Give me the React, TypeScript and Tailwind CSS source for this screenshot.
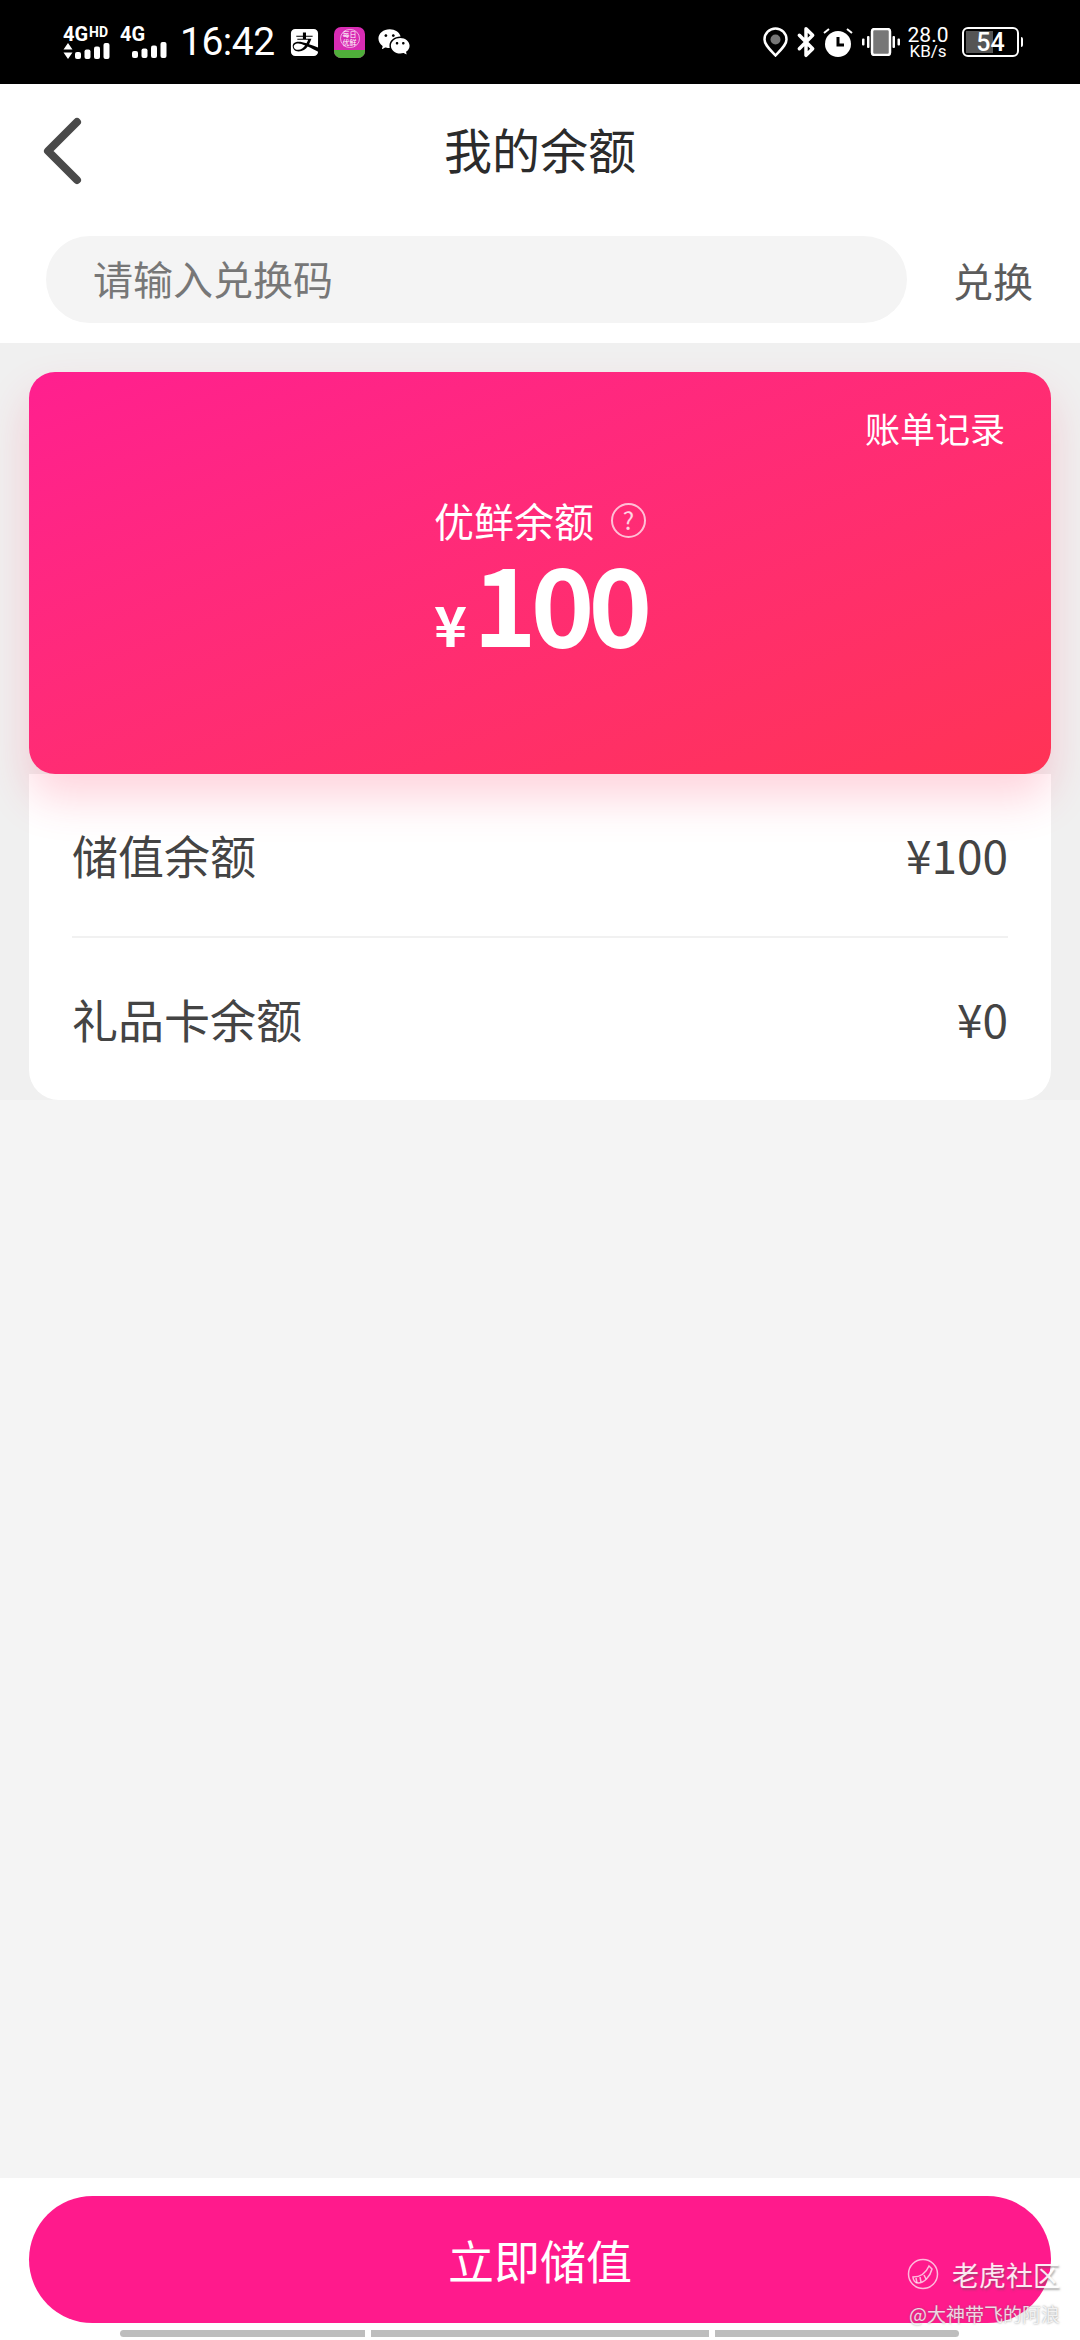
import { Bluetooth } from 'lucide-react'
import { FaAlipay } from 'react-icons/fa'
import { RiWechatFill } from 'react-icons/ri'

const cjk = "font-['Noto_Sans_CJK_SC','Noto_Sans',sans-serif]"

const SignalBars = () => (
  <svg width="35" height="16" viewBox="0 0 35 16" fill="#fff">
    <rect x="0" y="9" width="6" height="7" rx="2" />
    <rect x="9.5" y="6.5" width="6" height="9.5" rx="2" />
    <rect x="19" y="3.5" width="6" height="12.5" rx="2" />
    <rect x="28.5" y="0" width="6" height="16" rx="2" />
  </svg>
)

const StatusBar = () => (
  <div className="h-[84px] bg-black text-white flex items-center justify-between pl-[63px] pr-[57px] font-['Roboto',sans-serif]">
    <div className="flex items-center">
      <div className="w-[47px] h-[30px] flex flex-col">
        <div className="flex items-start h-[13px] text-[20px] leading-[14px] font-bold">
          4G<span className="text-[14px] leading-[11px] ml-px">HD</span>
        </div>
        <div className="flex items-center justify-between mt-[3px]">
          <svg width="10" height="16" viewBox="0 0 10 16" fill="#fff">
            <path d="M5 0l4.5 6.5h-9zM5 16L.5 9.5h9z" />
          </svg>
          <SignalBars />
        </div>
      </div>
      <div className="w-[47px] h-[30px] ml-[10px] relative">
        <div className="text-[20px] leading-[14px] font-bold">4G</div>
        <div className="absolute right-0 bottom-[-1px]">
          <SignalBars />
        </div>
      </div>
      <div className="ml-[13px] w-[97px] text-[39px] leading-none tracking-[-0.5px]">16:42</div>
      <FaAlipay className="ml-[12px] w-[31px] h-[31px]" />
      <div className="ml-[14px] w-[31px] h-[31px] rounded-[7px] overflow-hidden bg-[#d92cb4] flex flex-col items-center">
        <div className="mt-[2px] w-[20px] h-[19px] rounded-full border border-white/60 flex items-center justify-center">
          <span className={`${cjk} text-[7px] leading-[8px] text-center w-[16px]`}>每日优鲜</span>
        </div>
        <div className="mt-auto w-full h-[8px] bg-[#4fae3a]" />
      </div>
      <RiWechatFill className="ml-[12px] w-[34px] h-[34px]" />
    </div>

    <div className="flex items-center">
      <svg width="25" height="30" viewBox="0 0 25 30">
        <path d="M12.5 28.5C6 21.5 1.5 17.5 1.5 12.5a11 11 0 0 1 22 0c0 5-4.500 9-11 16z" fill="none" stroke="#fff" strokeWidth="2.500" />
        <circle cx="12.500" cy="12.500" r="5" fill="#777" />
      </svg>
      <Bluetooth className="ml-[2px] w-[32px] h-[36px] -my-[3px]" strokeWidth={2.6} />
      <svg className="ml-[1px]" width="30" height="30" viewBox="0 0 30 30">
        <circle cx="15" cy="17" r="13" fill="#fff" />
        <path d="M15 10v8h6" fill="none" stroke="#000" strokeWidth="3" />
        <path d="M1 6l5-4M29 6l-5-4" stroke="#fff" strokeWidth="2" />
      </svg>
      <svg className="ml-[9px]" width="38" height="28" viewBox="0 0 38 28">
        <rect x="10" y="1" width="18" height="26" rx="2.500" fill="#777" stroke="#fff" strokeWidth="2.500" />
        <rect x="5" y="8" width="2.500" height="12" rx="1" fill="#fff" />
        <rect x="0" y="10.500" width="2.500" height="7" rx="1" fill="#fff" />
        <rect x="30.500" y="8" width="2.500" height="12" rx="1" fill="#fff" />
        <rect x="35.500" y="10.500" width="2.500" height="7" rx="1" fill="#fff" />
      </svg>
      <div className="ml-[9px] w-[38px] flex flex-col items-center">
        <div className="text-[21px] leading-[18px]">28.0</div>
        <div className="text-[17px] leading-[15px]">KB/s</div>
      </div>
      <div className="ml-[15px] relative w-[57px] h-[30px] rounded-[6px] border-2 border-white overflow-hidden flex items-center justify-center">
        <div className="absolute left-[2px] top-[2px] bottom-[2px] w-[27px] bg-[#555]" />
        <span className="relative text-[25px] leading-none font-medium">54</span>
      </div>
      <div className="ml-[2px] w-[2px] h-[10px] bg-white rounded-r" />
    </div>
  </div>
)

const BalanceRow = ({ label, value }: { label: string; value: string }) => (
  <div className="flex-1 flex items-center justify-between text-[#444] text-[46px] leading-none pb-[2px]">
    <span>{label}</span>
    <span>{value}</span>
  </div>
)

const App = () => {
  return (
    <div className={`${cjk} w-[1080px] h-[2340px] flex flex-col bg-[#f4f4f4] overflow-hidden relative`}>
      <StatusBar />

      <div className="bg-white h-[259px] flex flex-col">
        <div className="relative h-[134px] flex items-center justify-center">
          <svg className="absolute left-[40px] top-[33px]" width="44" height="68" viewBox="0 0 44 68" fill="none">
            <path d="M37 5L8 34l29 29" stroke="#4a4a4a" strokeWidth="8" strokeLinecap="round" strokeLinejoin="round" />
          </svg>
          <div className="text-[48px] leading-none text-[#2b2b2b] mt-[-6px]">我的余额</div>
        </div>
        <div className="flex items-center pl-[46px] pr-[47px] mt-[18px]">
          <div className="w-[861px] h-[87px] rounded-full bg-[#f4f4f4] flex items-center pl-[47px] pb-[3px] text-[40px] text-[#777]">
            请输入兑换码
          </div>
          <button className="ml-auto text-[40px] leading-none text-[#5c5c5c]">兑换</button>
        </div>
      </div>

      <div className="bg-[#f0f0f0] h-[757px] px-[29px] pt-[29px] flex flex-col">
        <div className="relative z-10 h-[402px] rounded-[26px] bg-gradient-to-br from-[#ff1f8f] to-[#ff3355] shadow-[0_24px_44px_rgba(255,60,100,0.22)] text-white flex flex-col items-center">
          <div className="self-end mr-[46px] mt-[34px] text-[35px] leading-[44px]">账单记录</div>
          <div className="mt-[44px] flex items-center h-[52px] text-[40px] leading-none">
            优鲜余额
            <span className="ml-[17px] w-[35px] h-[35px] rounded-full border-2 border-white/70 flex items-center justify-center text-[24px] leading-none text-white/80">?</span>
          </div>
          <div className="flex items-baseline font-bold h-[110px] leading-[110px] -mt-px">
            <span className="text-[56px]">¥</span>
            <span className="ml-[6px] text-[108px] tracking-[-6px]">100</span>
          </div>
        </div>
        <div className="flex-1 bg-white rounded-b-[30px] px-[43px] flex flex-col">
          <BalanceRow label="储值余额" value="¥100" />
          <div className="h-[2px] bg-[#f1f1f1]" />
          <BalanceRow label="礼品卡余额" value="¥0" />
        </div>
      </div>

      <div className="flex-1" />

      <div className="bg-white h-[162px] px-[29px] pt-[18px] flex flex-col">
        <button className="h-[127px] rounded-full bg-[#ff1a8c] text-white text-[46px]">立即储值</button>
        <div className="mt-[7px] px-[91px] flex gap-[6px]">
          <div className="w-[245px] h-[7px] bg-[#bdbdbd] rounded-l" />
          <div className="w-[338px] h-[7px] bg-[#bdbdbd]" />
          <div className="w-[244px] h-[7px] bg-[#bdbdbd] rounded-r" />
        </div>
      </div>

      <div className="absolute right-[20px] top-[2258px] flex items-center text-white/90 text-[27px] leading-none [text-shadow:1px_2px_2px_rgba(90,90,90,0.5)]">
        <svg width="32" height="32" viewBox="0 0 32 32" fill="none" stroke="#fff" strokeOpacity="0.7" strokeWidth="1.500">
          <circle cx="16" cy="16" r="14.500" />
          <path d="M6 19c7 0 13-4 16-11l3 3c-2 8-8 14-14 14-3 0-5-3-5-6z" />
          <path d="M9 20l1 5M13 19l1 5M17 17l2 4" />
        </svg>
        <span className="ml-[13px]">老虎社区</span>
      </div>
      <div className="absolute right-[20px] top-[2304px] text-white/80 text-[19px] leading-none [text-shadow:0_0_2px_rgba(90,90,90,0.7)]">
        @大神带飞的阿浪
      </div>
    </div>
  )
}

export default App
